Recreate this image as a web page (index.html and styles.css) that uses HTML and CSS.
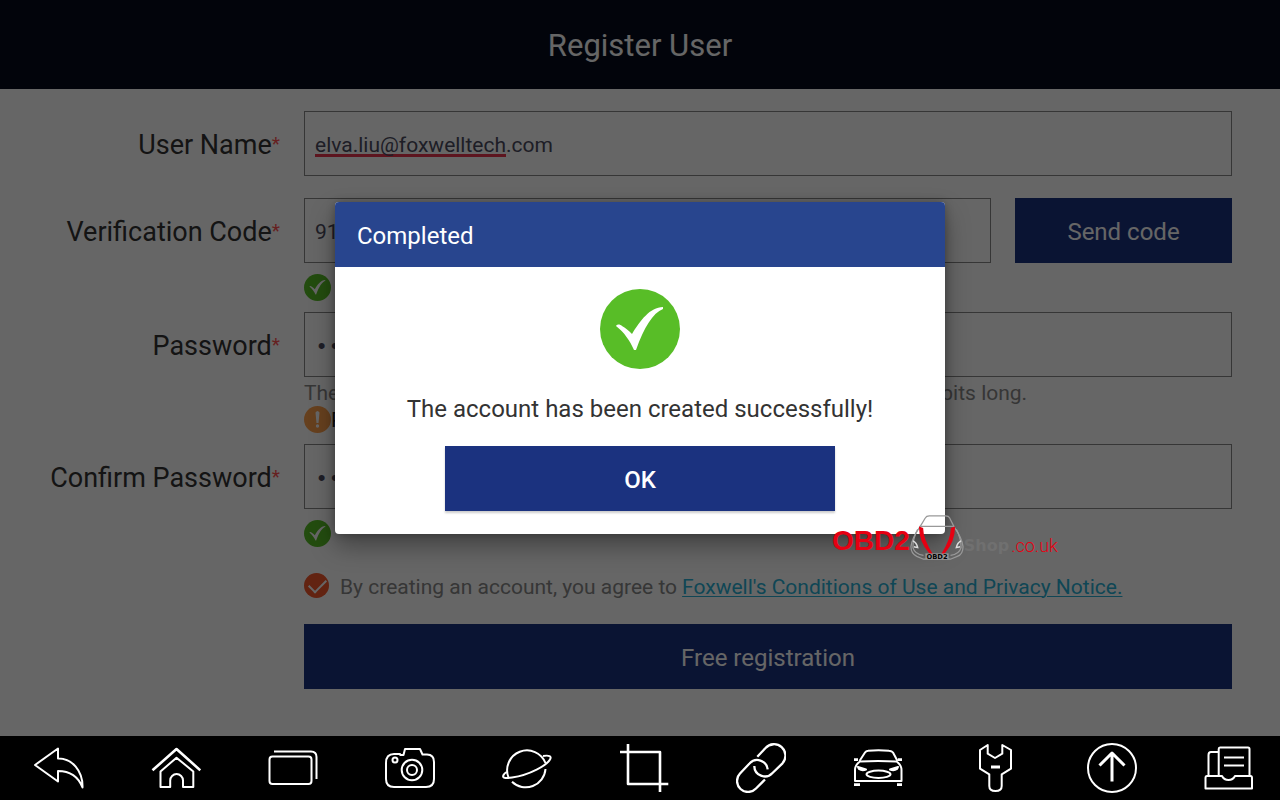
FILE: index.html
```html
<!DOCTYPE html>
<html lang="en">
	<head>
		<meta charset="UTF-8">
		<meta name="viewport" content="width=device-width, initial-scale=1.0">
		<title>Register User</title>
		<link rel="stylesheet" href="styles.css">
	</head>
	<body>
		<!-- icons used more than once -->
		<svg class="defs" aria-hidden="true">
			<symbol id="tick" viewBox="0 0 80 80">
				<circle cx="40" cy="40" r="40" fill="#58bd27"/>
				<path d="M16 37C17 35 20 35 22 37C26 39 29 42 32 45C40 32 50 18 63 18L63 20C53 24 44 38 36 61L34 61C30 52 24 43 16 37Z" fill="#fff"/>
			</symbol>
		</svg>

		<div class="screen">
			<header class="title_bar"><h1>Register User</h1></header>
			<form class="form">
				<label for="user">User Name<i>*</i></label>
				<input class="box user" id="user" type="text" value="elva.liu@foxwelltech.com" spellcheck="false">

				<label class="gap" for="code">Verification Code<i>*</i></label>
				<div class="code_row gap">
					<input class="box" id="code" type="text" value="917264">
					<button class="btn send" type="button">Send code</button>
				</div>
				<div class="state"><svg><use href="#tick"/></svg></div>

				<label for="pwd">Password<i>*</i></label>
				<input class="box pwd" id="pwd" type="password" value="12345678">
				<p class="hint">The password should include letters and numbers and must be 6-20 bits long.</p>
				<div class="state warn">
					<svg viewBox="0 0 27 27">
						<circle cx="13.5" cy="13.5" r="13.5" fill="#ffa04c"/>
						<path d="M11.5 6.5Q13.5 3.5 15.5 6.5L14.5 17H12.5Z" fill="#fff"/>
						<circle cx="13.5" cy="20" r="1.7" fill="#fff"/>
					</svg>
					<span>Poor</span>
				</div>

				<label for="pwd2">Confirm Password<i>*</i></label>
				<input class="box pwd" id="pwd2" type="password" value="12345678">
				<div class="state last"><svg><use href="#tick"/></svg></div>

				<div class="agree">
					<input id="agree" type="checkbox" checked>
					<label for="agree">By creating an account, you agree to</label>
					<a href="#">Foxwell's Conditions of Use and Privacy Notice.</a>
				</div>
				<button class="btn submit" type="button">Free registration</button>
			</form>

			<div class="mask">
				<div class="dialog" role="dialog" aria-labelledby="dialog_title">
					<h2 id="dialog_title">Completed</h2>
					<div class="dialog_body">
						<svg><use href="#tick"/></svg>
						<p>The account has been created successfully!</p>
						<button class="btn ok" type="button">OK</button>
					</div>
				</div>
			</div>

			<div class="watermark">
				<b class="obd">OBD2</b>
				<svg viewBox="0 0 56 48" fill="none" stroke="#999" stroke-width="1.3">
					<path d="M10 13L16 3Q17 1 20 1H37Q40 1 41 3L46 13Q54 24 55 33Q55 41 49 43L42 46H14L7 43Q1 40 1 33Q2 24 10 13Z"/>
					<path d="M10 12H46M8 15Q3 24 3 34Q5 41 14 42M48 15Q53 24 53 34Q51 41 42 42"/>
					<path d="M3 27Q7 29 8 34L4 33M53 27Q49 29 48 34L52 33" stroke="#ddd" stroke-width="1.5"/>
					<path d="M10 13Q10 27 20 39L23 41Q13 25 13 14ZM46 13Q46 27 36 39L33 41Q43 25 43 14Z" fill="#e60012" stroke="#e60012"/>
					<rect x="16" y="40" width="24" height="6" fill="#999" stroke="none"/>
					<text x="28" y="46" text-anchor="middle">OBD2</text>
				</svg>
				<b class="shop">Shop</b>
				<span class="domain">.co.uk</span>
			</div>
		</div>

		<nav class="tool_bar">
			<button type="button" aria-label="Back"><svg viewBox="0 0 50 50">
				<path d="M1 22L24 5.5V15.5C38 15 49 28 48.5 44.5C44 33 36 28 24 28V38.5Z"/>
			</svg></button>
			<button type="button" aria-label="Home"><svg viewBox="0 0 50 50">
				<path d="M1.5 27.3L25.5 6L49.3 27.3" stroke-width="2.6"/>
				<path d="M9.5 28.5L25.5 14.7L42.3 28.5V44H32V37.5A6.3 6.3 0 0 0 19.2 37.5V44H9.5Z"/>
			</svg></button>
			<button type="button" aria-label="Windows"><svg viewBox="0 0 50 50">
				<rect x="1.5" y="13.5" width="42" height="27.5" rx="3"/>
				<path d="M6 8.5H43Q48.5 8.5 48.5 14V36"/>
			</svg></button>
			<button type="button" aria-label="Camera"><svg viewBox="0 0 50 50">
				<path d="M15 12V11H9Q1 11 1 20V36Q1 44 9 44H41Q49 44 49 36V19Q49 11.5 42 11.5H37.5L35 6H20L18.5 12H14.5"/>
				<circle cx="27" cy="27" r="10.3"/><circle cx="27" cy="27" r="5"/><circle cx="10" cy="17" r="2.5"/>
			</svg></button>
			<button type="button" aria-label="Browser"><svg viewBox="0 0 50 50">
				<path d="M43.5 20A19.8 19.8 0 1 0 6.5 34.5M10 38.8A19.8 19.8 0 0 0 43.5 26"/>
				<path d="M41 13C47 12 50 13 48 16.5C45 22 28 32 10 34.5C3 35.5 0 35 1.5 32C2.5 30 4 29.5 5 29"/>
			</svg></button>
			<button type="button" aria-label="Crop"><svg viewBox="0 0 50 50">
				<path d="M1 9H41V49M9 1V41H49.3" stroke-width="2.6"/>
			</svg></button>
			<button type="button" aria-label="Link"><svg viewBox="0 0 50 50">
				<path d="M21.3 13.7L29.5 5A10.5 10.5 0 0 1 46.5 20.3L36.5 30A10.5 10.5 0 0 1 18.3 23" stroke-width="2.3"/>
				<path d="M31.7 26.3A10.5 10.5 0 0 0 13.5 20.5L4 30.5A10.5 10.5 0 0 0 20 45.5L29 36.5" stroke-width="2.3"/>
			</svg></button>
			<button type="button" aria-label="Vehicle"><svg viewBox="0 0 50 50">
				<path d="M6.5 18L12 9.5Q13 8 15 7.8Q25.5 6.5 36 7.8Q39 8 40 9.5L44.5 18"/>
				<path d="M2 38V27Q2 22 7 18.5Q25 17.5 43.5 18.5Q48.5 22 48.5 27V38Z"/>
				<path d="M1 16.7H5M45 16.7H49M1 41.7H7M44 41.7H49" stroke-width="2.8"/>
				<path d="M5 24L13 26.5Q9 28 6 26ZM45 24L37 26.5Q41 28 44 26Z" fill="#fff"/>
				<ellipse cx="25.5" cy="31.3" rx="12" ry="3.7"/>
			</svg></button>
			<button type="button" aria-label="Settings"><svg viewBox="0 0 50 50">
				<path d="M17.7 2L10 7V25.7L19.3 31.3V43Q19.3 48 25.5 48Q31.7 48 31.7 43V31.3L41 25.7V7L32.3 2V10.7L25 15L17.7 10.7Z"/>
				<path d="M21 24H30" stroke-width="3"/>
			</svg></button>
			<button type="button" aria-label="Upload"><svg viewBox="0 0 50 50">
				<circle cx="25" cy="25" r="24"/>
				<path d="M25 38.5V10M12.5 22.5L25 10L37.5 22.5" stroke-width="3"/>
			</svg></button>
			<button type="button" aria-label="Documents"><svg viewBox="0 0 50 50">
				<path d="M14.7 33V6Q14.7 4.5 16 4.5H44Q45.5 4.5 45.5 6V33M14.7 9H7Q4.5 9 4.5 12V33M20 14.5H40M20 22.5H40"/>
				<path d="M3 33H18Q20 37 24.5 37Q29 37 31 33H46.5Q48 33 48 35V45.5H1.5V35Q1.5 33 3 33Z"/>
			</svg></button>
		</nav>
	</body>
</html>
```
FILE: styles.css
```css
* {
	margin: 0;
	padding: 0;
	box-sizing: border-box;
}

body {
	display: flex;
	flex-direction: column;
	min-height: 100vh;
	font-family: Roboto, "Liberation Sans", sans-serif;
	font-size: 21px;
	color: #333;
	background-color: #fff;
}

button, input {
	font: inherit;
	border: none;
	border-radius: 0;
}

.defs {
	position: absolute;
	width: 0;
	height: 0;
}

.screen {
	position: relative;
	flex: 1;
}

.title_bar {
	padding: 25px 24px 23px;
	background-color: #060b1c;
	color: #fff;
	text-align: center;
}

.title_bar h1 {
	font-size: 31px;
	line-height: 41px;
	font-weight: 400;
}

/* form */
.form {
	display: grid;
	grid-template-columns: 280px 1fr;
	column-gap: 24px;
	padding: 22px 48px 47px 0;
}

.form > label {
	height: 65px;
	line-height: 68px;
	font-size: 27px;
	text-align: right;
}

.form i {
	font-size: 19px;
	line-height: 1;
	font-style: normal;
	color: #ff5050;
	vertical-align: 4px;
}

.form > .gap {
	margin-top: 22px;
}

.box {
	width: 100%;
	height: 65px;
	padding: 2px 10px 0;
	border: 1px solid #888;
	background-color: #fff;
	color: #4c4c60;
}

/* the spelling mark runs under the first word only */
.user {
	background-image: linear-gradient(#e8354f, #e8354f);
	background-repeat: no-repeat;
	background-position: 10px 42px;
	background-size: 191px 3px;
}

.pwd {
	padding-top: 5px;
	font-family: "Liberation Mono", monospace;
	font-size: 22px;
}

.code_row {
	display: flex;
	gap: 24px;
}

.code_row .box {
	flex: 1;
	min-width: 0;
}

.btn {
	height: 65px;
	padding-top: 2px;
	background-color: #1b327f;
	color: #fff;
	font-size: 24px;
	cursor: pointer;
}

.send {
	width: 217px;
}

.state, .hint, .agree, .submit {
	grid-column: 2;
}

.state {
	display: flex;
	align-items: center;
	padding: 11px 0;
}

.state svg {
	width: 27px;
	height: 27px;
}

.state.warn {
	padding-top: 0;
	color: #222;
}

.state.last {
	padding-bottom: 0;
}

.hint {
	height: 29px;
	line-height: 32px;
	color: #888;
}

.agree {
	display: flex;
	align-items: center;
	height: 77px;
	color: #888;
}

.agree input {
	appearance: none;
	width: 25px;
	height: 25px;
	margin-right: 11px;
	border-radius: 50%;
	background-color: #f4572c;
}

.agree input:checked::before {
	content: "";
	display: block;
	width: 15px;
	height: 8px;
	margin: 6px 5px;
	border: solid #fff;
	border-width: 0 0 2px 2px;
	transform: rotate(-45deg);
}

.agree label, .agree a {
	padding-top: 2px;
}

.agree a {
	margin-left: 5px;
	color: #28b0d4;
	text-underline-offset: 2px;
	text-decoration-thickness: 1px;
}

/* dialog */
.mask {
	position: absolute;
	inset: 0;
	display: flex;
	align-items: center;
	justify-content: center;
	background-color: rgba(0, 0, 0, .6);
}

.dialog {
	width: 610px;
	border-radius: 4px;
	background-color: #fff;
	box-shadow: 0 12px 24px rgba(0, 0, 0, .35), 0 0 8px rgba(0, 0, 0, .25);
}

.dialog h2 {
	padding: 3px 22px 0;
	border-radius: 4px 4px 0 0;
	background-color: #28458e;
	color: #fff;
	font-size: 24px;
	font-weight: 400;
	line-height: 62px;
}

.dialog_body {
	display: flex;
	flex-direction: column;
	align-items: center;
	padding: 22px 0 23px;
}

.dialog_body svg {
	width: 80px;
	height: 80px;
}

.dialog_body p {
	margin: 24px 0 21px;
	font-size: 24px;
	line-height: 32px;
}

.ok {
	width: 390px;
	font-weight: 500;
	box-shadow: 0 2px 2px rgba(0, 0, 0, .2);
}

/* shop mark over the dialog corner */
.watermark {
	position: absolute;
	left: 65%;
	top: 514px;
	display: flex;
	align-items: center;
	font-family: "Liberation Sans", Arial, sans-serif;
	color: #e60012;
}

.watermark svg {
	width: 54px;
	height: 48px;
}

.watermark text {
	font-family: "DejaVu Sans", sans-serif;
	font-size: 7px;
	font-weight: 700;
	fill: #000;
	stroke: none;
}

.obd {
	padding-top: 5px;
	font-size: 28px;
	line-height: 34px;
}

.shop {
	padding-top: 14px;
	font-family: "DejaVu Sans", sans-serif;
	font-size: 16px;
	color: #707070;
}

.domain {
	padding: 14px 0 0 2px;
	font-family: Roboto, sans-serif;
	font-size: 18px;
	font-weight: 300;
}

/* bottom tool bar */
.tool_bar {
	display: flex;
	align-items: center;
	justify-content: space-between;
	height: 64px;
	padding: 0 26px 0 34px;
	background-color: #000;
}

.tool_bar button {
	width: 50px;
	height: 50px;
	background: none;
	cursor: pointer;
}

.tool_bar svg {
	display: block;
	width: 50px;
	height: 50px;
	fill: none;
	stroke: #fff;
	stroke-width: 2;
	stroke-linejoin: round;
}
```
